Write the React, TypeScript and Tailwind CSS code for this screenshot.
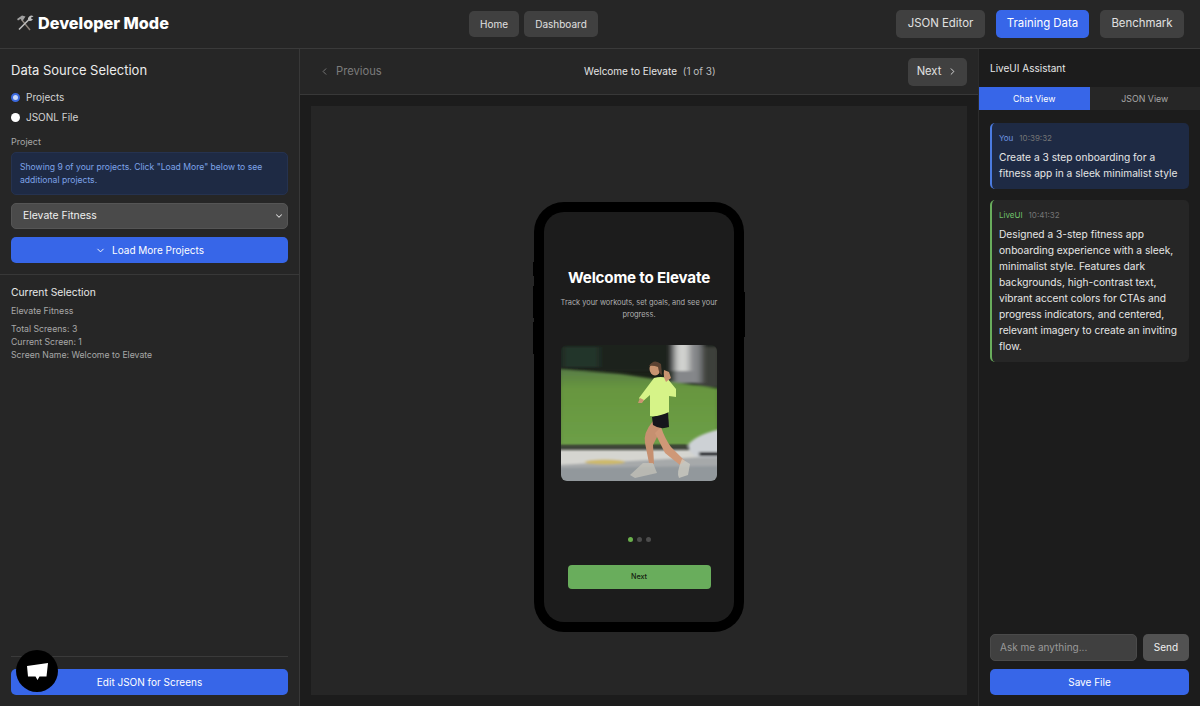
import React from 'react';
import { ChevronDown, ChevronLeft, ChevronRight } from 'lucide-react';

const ui = "font-['Inter','Liberation_Sans',sans-serif]";

function RunnerPhoto() {
    return (
        <svg viewBox="0 0 156 136" className="w-[156px] h-[136px] rounded-[6px] block" preserveAspectRatio="none">
            <defs>
                <filter id="b1" x="-10%" y="-10%" width="120%" height="120%"><feGaussianBlur stdDeviation="3 1.2" /></filter>
                <filter id="b2" x="-10%" y="-10%" width="120%" height="120%"><feGaussianBlur stdDeviation="1.6 0.8" /></filter>
                <filter id="b3"><feGaussianBlur stdDeviation="0.45" /></filter>
                <linearGradient id="grass" x1="0" y1="0" x2="0" y2="1">
                    <stop offset="0" stopColor="#587c46" />
                    <stop offset="0.25" stopColor="#67963f" />
                    <stop offset="1" stopColor="#6d9f47" />
                </linearGradient>
            </defs>
            <rect width="156" height="136" fill="#1b2218" />
            <g filter="url(#b1)">
                <rect x="-4" y="-4" width="164" height="30" fill="#1d231c" />
                <rect x="2" y="2" width="36" height="20" fill="#24352a" />
                <rect x="136" y="2" width="24" height="40" fill="#3d3f3a" />
                <rect x="112" y="-4" width="28" height="42" fill="#85878a" />
                <rect x="115" y="-4" width="13" height="30" fill="#d2d3d0" />
                <path d="M-4 24 L60 29 L160 44 L160 100 L-4 101 Z" fill="url(#grass)" />
            </g>
            <g filter="url(#b2)">
                <rect x="-4" y="100" width="130" height="4" fill="#41463a" />
                <rect x="-4" y="105" width="164" height="16" fill="#d5d5d0" />
                <rect x="-4" y="120" width="164" height="20" fill="#92989c" />
                <path d="M-4 120 L160 111 L160 121 L-4 123 Z" fill="#a6a9aa" />
                <ellipse cx="44" cy="117" rx="20" ry="2.5" fill="#cdb96b" />
                <path d="M127 100 Q134 90 160 84 L160 112 L136 112 Q127 108 127 100 Z" fill="#cdd1d5" />
                <rect x="138" y="107" width="22" height="4" fill="#1e2028" />
            </g>
            <g filter="url(#b3)">
                <path d="M92 76 Q82 88 84 98 L88 118 L93 119 L92 100 L100 84 Z" fill="#c69070" />
                <path d="M100 82 Q104 94 110 102 L124 116 L119 120 L104 108 L94 88 Z" fill="#cf9877" />
                <path d="M82 118 L92 118 L96 128 L74 133 L69 130 Z" fill="#c7c6bc" opacity="0.7" />
                <path d="M121 114 L129 119 L127 130 L118 133 Q115 128 121 114 Z" fill="#cfcec3" opacity="0.75" />
                <path d="M91 72 L107 67 L108 82 Q99 85 92 80 Z" fill="#15161a" />
                <path d="M93 33 Q100 31 106 33 L115 44 L115 52 L108 51 L108 67 Q98 72 89 71 L89 50 L81 57 L78 53 Z" fill="#d6f388" />
                <path d="M103 25 L108 27 L110 33 L105 37 Q102 32 103 25 Z" fill="#c9946f" />
                <path d="M79 53 L77 58 L81 58 L83 55 Z" fill="#c9946f" />
                <ellipse cx="94" cy="24" rx="5.5" ry="6.5" fill="#c9946f" />
                <path d="M88 21 Q93 13 100 19 L101 30 Q98 29 97 22 Q92 20 88 21 Z" fill="#5c4330" />
            </g>
        </svg>
    );
}

function PhonePreview() {
    return (
        <div className="relative w-[210px] h-[430px] bg-black rounded-[30px] p-[10px]">
            <span className="absolute left-[-1px] top-[60px] w-[1px] h-[14px] bg-black"></span>
            <span className="absolute left-[-1px] top-[84px] w-[1px] h-[32px] bg-black"></span>
            <span className="absolute left-[-1px] top-[120px] w-[1px] h-[32px] bg-black"></span>
            <span className="absolute right-[-1px] top-[90px] w-[1px] h-[45px] bg-black"></span>
            <div className="h-full bg-[#1c1c1c] rounded-[20px] flex flex-col items-center px-[14px] font-['Inter',sans-serif]">
                <div className="mt-[56px] text-white font-bold text-[15.2px] leading-[20px] tracking-[-0.2px] whitespace-nowrap">Welcome to Elevate</div>
                <p className="mt-[9px] text-[#b0b0b0] text-[7.4px] leading-[12px] text-center">Track your workouts, set goals, and see your progress.</p>
                <div className="mt-[24px]"><RunnerPhoto /></div>
                <div className="mt-[56px] flex gap-[4px]">
                    <span className="w-[5px] h-[5px] rounded-full bg-[#6ab04c]"></span>
                    <span className="w-[5px] h-[5px] rounded-full bg-[#4c4c4c]"></span>
                    <span className="w-[5px] h-[5px] rounded-full bg-[#4c4c4c]"></span>
                </div>
                <div className="mt-[23px] w-[143px] h-[24px] pt-[2px] rounded-[4px] bg-[#69ad5c] text-[#14200f] text-[7.2px] font-medium flex items-center justify-center">Next</div>
            </div>
        </div>
    );
}

function Sidebar() {
    return (
        <aside className="w-[300px] shrink-0 border-r border-[#383838] bg-[#262626] flex flex-col">
            <div className="px-[11px] pt-[13px]">
                <h2 className="text-[13px] leading-[16px] text-[#ececec]">Data Source Selection</h2>
                <label className="mt-[11px] flex items-center gap-[6px] h-[16px] text-[10px] text-[#d4d4d4]">
                    <span className="w-[9px] h-[9px] rounded-full bg-[#c9d8f8] border-[2px] border-[#3b69dd]"></span>
                    Projects
                </label>
                <label className="mt-[4px] flex items-center gap-[6px] h-[16px] text-[10px] text-[#d4d4d4]">
                    <span className="w-[9px] h-[9px] rounded-full bg-white"></span>
                    JSONL File
                </label>
                <div className="mt-[11px] text-[9px] leading-[12px] text-[#a8a8a8]">Project</div>
                <div className="mt-[4px] h-[43px] rounded-[5px] bg-[#1e2a44] border border-[#25324f] px-[8px] py-[8px] text-[8.6px] leading-[12.5px] text-[#7da3e8]">
                    Showing 9 of your projects. Click "Load More" below to see additional projects.
                </div>
                <div className="mt-[8px] h-[26px] rounded-[5px] bg-[#4a4a4a] border border-[#555] pl-[11px] pr-[3px] flex items-center justify-between text-[10.4px] text-[#f0f0f0]">
                    Elevate Fitness
                    <ChevronDown size={10} strokeWidth={2.5} className="text-[#ddd]" />
                </div>
                <button className="mt-[8px] w-full h-[26px] rounded-[5px] bg-[#3766e8] text-white text-[10px] flex items-center justify-center gap-[6px]">
                    <ChevronDown size={11} />
                    Load More Projects
                </button>
            </div>
            <div className="mt-[11px] border-t border-[#383838] px-[11px] pt-[11px]">
                <h3 className="text-[10.3px] leading-[13px] text-[#e8e8e8]">Current Selection</h3>
                <div className="mt-[6px] text-[8.8px] leading-[12px] text-[#a8a8a8]">Elevate Fitness</div>
                <div className="mt-[6px] text-[8.7px] leading-[13px] text-[#a8a8a8]">
                    <div>Total Screens: 3</div>
                    <div>Current Screen: 1</div>
                    <div>Screen Name: Welcome to Elevate</div>
                </div>
            </div>
            <div className="mt-auto px-[11px] pb-[11px]">
                <div className="border-t border-[#3a3a3a] pt-[11px]">
                    <button className="w-full h-[26px] rounded-[5px] bg-[#3766e8] text-white text-[10px]">Edit JSON for Screens</button>
                </div>
            </div>
        </aside>
    );
}

function Preview() {
    return (
        <main className="flex-1 min-w-0 bg-[#1c1c1c] flex flex-col">
            <div className="h-[46px] shrink-0 bg-[#262626] border-b border-[#383838] pl-[19px] pr-[11px] flex items-center justify-between">
                <div className="flex items-center gap-[6px] text-[11.2px] text-[#7c7c7c]">
                    <ChevronLeft size={11} />
                    Previous
                </div>
                <div className="text-[10px] text-[#e4e4e4] ml-[10px]">
                    Welcome to Elevate <span className="ml-[3px] text-[#bdbdbd]">(1 of 3)</span>
                </div>
                <div className="w-[59px] h-[28px] rounded-[5px] bg-[#404040] text-[11.2px] text-[#e0e0e0] flex items-center justify-center gap-[6px]">
                    Next
                    <ChevronRight size={11} />
                </div>
            </div>
            <div className="flex-1 p-[11px] min-h-0">
                <div className="h-full bg-[#262626] pt-[32px] flex items-center justify-center">
                    <PhonePreview />
                </div>
            </div>
        </main>
    );
}

function ChatMessage({ who, time, accent, tint, border, children }: { who: string; time: string; accent: string; tint: string; border: string; children: React.ReactNode }) {
    return (
        <div className={`rounded-[5px] border-l-[2px] ${border} ${tint} pl-[7px] pr-[6px] pt-[9px] pb-[8px]`}>
            <div className="text-[8px] leading-[12px]">
                <span className={accent}>{who}</span>
                <span className="ml-[6px] text-[#757575]">{time}</span>
            </div>
            <p className="mt-[5px] text-[10.2px] leading-[16px] text-[#e6e6e6]">{children}</p>
        </div>
    );
}

function Assistant() {
    return (
        <aside className="w-[222px] shrink-0 bg-[#1c1c1c] border-l border-[#2c2c2c] flex flex-col">
            <div className="h-[38px] shrink-0 px-[11px] flex items-center text-[10px] text-[#e6e6e6]">LiveUI Assistant</div>
            <div className="h-[23px] shrink-0 flex text-[8.8px]">
                <div className="w-1/2 bg-[#3766e8] text-white flex items-center justify-center">Chat View</div>
                <div className="w-1/2 bg-[#262626] text-[#a8a8a8] flex items-center justify-center">JSON View</div>
            </div>
            <div className="flex-1 min-h-0 px-[11px] pt-[13px] flex flex-col gap-[11px]">
                <ChatMessage who="You" time="10:39:32" accent="text-[#6f96e6]" tint="bg-[#1e2a44]" border="border-[#4b7be0]">
                    Create a 3 step onboarding for a fitness app in a sleek minimalist style
                </ChatMessage>
                <ChatMessage who="LiveUI" time="10:41:32" accent="text-[#6fc06a]" tint="bg-[#262626]" border="border-[#69ad5c]">
                    Designed a 3-step fitness app onboarding experience with a sleek, minimalist style. Features dark backgrounds, high-contrast text, vibrant accent colors for CTAs and progress indicators, and centered, relevant imagery to create an inviting flow.
                </ChatMessage>
            </div>
            <div className="px-[11px] pb-[11px]">
                <div className="flex gap-[6px]">
                    <div className="flex-1 h-[27px] rounded-[5px] bg-[#404040] border border-[#4a4a4a] pl-[9px] flex items-center text-[10px] text-[#9a9a9a]">Ask me anything...</div>
                    <button className="w-[46px] h-[27px] rounded-[5px] bg-[#525252] text-[10px] text-[#f0f0f0]">Send</button>
                </div>
                <button className="mt-[8px] w-full h-[26px] rounded-[5px] bg-[#3766e8] text-white text-[10px]">Save File</button>
            </div>
        </aside>
    );
}

export default function App() {
    return (
        <div className={`${ui} relative w-[1200px] h-[706px] overflow-hidden bg-[#262626] flex flex-col`}>
            <header className="h-[49px] shrink-0 border-b border-[#3a3a3a] pl-[16px] pr-[16px] pb-[1px] flex items-center relative">
                <div className="flex items-center gap-[4px] text-white font-extrabold text-[16.2px]">
                    <svg viewBox="0 0 18 18" className="w-[18px] h-[18px]" fill="none">
                        <path d="M5.5 5.5 L14 16" stroke="#8a8078" strokeWidth="1.4" />
                        <path d="M1 5 L6 1.5 L9.5 2.5 L8.5 4 L6.5 7 L4.5 5 L2 6.5 Z" fill="#a0a0a0" />
                        <path d="M13.5 5 L3 15.5" stroke="#bdbdbd" strokeWidth="1.6" />
                        <path d="M17.5 2.5 A3.4 3.4 0 0 0 12 6 L13.5 7 A3.4 3.4 0 0 0 17 5 L15.5 5 L15 3.5 Z" fill="#bdbdbd" />
                    </svg>
                    Developer Mode
                </div>
                <nav className="absolute left-[469px] top-[11px] flex gap-[5px] text-[10px] text-[#e0e0e0]">
                    <a className="w-[50px] h-[26px] rounded-[5px] bg-[#404040] flex items-center justify-center">Home</a>
                    <a className="w-[74px] h-[26px] rounded-[5px] bg-[#404040] flex items-center justify-center">Dashboard</a>
                </nav>
                <div className="ml-auto flex gap-[11px] text-[11.4px]">
                    <button className="w-[89px] h-[28px] rounded-[5px] bg-[#404040] text-[#e0e0e0]">JSON Editor</button>
                    <button className="w-[93px] h-[28px] rounded-[5px] bg-[#3766e8] text-white">Training Data</button>
                    <button className="w-[84px] h-[28px] rounded-[5px] bg-[#404040] text-[#e0e0e0]">Benchmark</button>
                </div>
            </header>
            <div className="flex-1 min-h-0 flex">
                <Sidebar />
                <Preview />
                <Assistant />
            </div>
            <div className="absolute left-[16px] top-[650px] w-[42px] h-[42px] rounded-full bg-black flex items-center justify-center">
                <svg viewBox="0 0 21 17" className="w-[21px] h-[17px]">
                    <path d="M0 3 L21 0 L19.5 13.5 L12.5 13.5 L10.5 17 L8.5 13.5 L1 13.5 Z" fill="#fff" />
                </svg>
            </div>
        </div>
    );
}
